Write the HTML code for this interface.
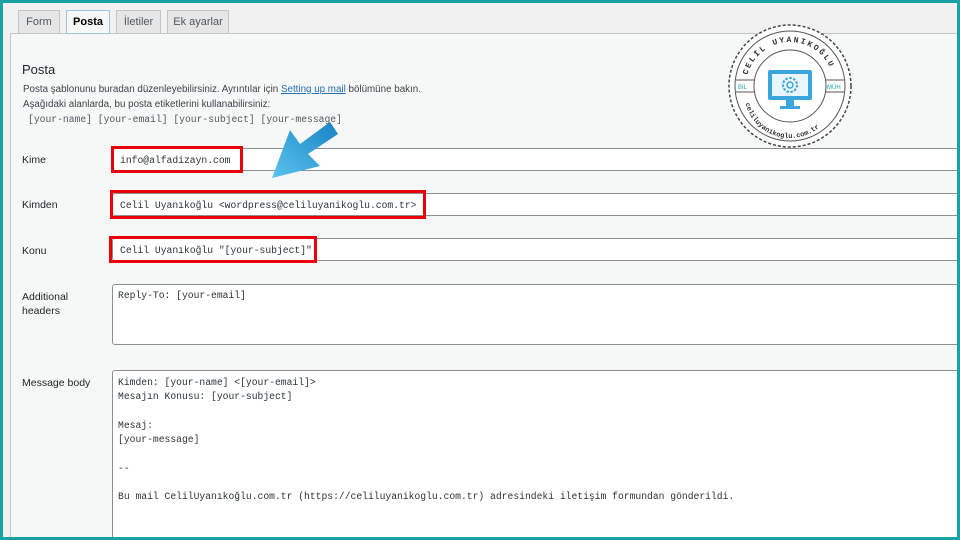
<!DOCTYPE html>
<html><head><meta charset="utf-8"><style>
*{margin:0;padding:0;box-sizing:border-box}
html,body{width:960px;height:540px;overflow:hidden}
body{background:#f1f1f1;font-family:"Liberation Sans",sans-serif;position:relative;color:#1d2327}
.frame{position:absolute;left:0;top:0;width:960px;height:540px;border:3px solid #17a2a4;pointer-events:none;z-index:10}
.tab{position:absolute;top:10px;height:24px;border:1px solid #c3c4c7;background:#e6e6e6;font-size:11px;color:#50575e;line-height:22px;text-align:center}
.tab.a{background:#f6f7f7;border:1px solid #9ec2e6;color:#000;font-weight:bold;height:24px}
.panel{position:absolute;left:10px;top:33px;width:960px;height:520px;background:#f6f7f7;border:1px solid #c3c4c7}
.t{position:absolute;font-size:9.8px;color:#3c434a}
.mono{font-family:"Liberation Mono",monospace;font-size:9.7px;color:#2c3338}
.lbl{position:absolute;left:22px;font-size:10.5px;color:#1d2327}
.inp{position:absolute;left:112px;width:860px;background:#fff;border:1px solid #8c8f94;border-radius:3px;overflow:hidden}
.inp span{position:absolute;left:7px;top:6px}
.red{position:absolute;border:3px solid #e8000b}
</style></head><body>
<div class="panel"></div>
<div class="tab" style="left:18px;width:42px">Form</div>
<div class="tab a" style="left:66px;width:44px">Posta</div>
<div class="tab" style="left:116px;width:45px">İletiler</div>
<div class="tab" style="left:167px;width:62px">Ek ayarlar</div>
<div class="t" style="left:22px;top:62px;font-size:13px;color:#1d2327">Posta</div>
<div class="t" style="left:23px;top:84px">Posta şablonunu buradan düzenleyebilirsiniz. Ayrıntılar için <span style="color:#2271b1;text-decoration:underline">Setting up mail</span> bölümüne bakın.</div>
<div class="t" style="left:23px;top:99px">Aşağıdaki alanlarda, bu posta etiketlerini kullanabilirsiniz:</div>
<div class="t mono" style="left:28px;top:114px;color:#50575e">[your-name] [your-email] [your-subject] [your-message]</div>
<div class="lbl" style="top:154px">Kime</div>
<div class="inp mono" style="top:148px;height:23px"><span>info@alfadizayn.com</span></div>
<div class="lbl" style="top:199px">Kimden</div>
<div class="inp mono" style="top:193px;height:23px"><span>Celil Uyanıkoğlu &lt;wordpress@celiluyanikoglu.com.tr&gt;</span></div>
<div class="lbl" style="top:245px">Konu</div>
<div class="inp mono" style="top:238px;height:23px"><span>Celil Uyanıkoğlu "[your-subject]"</span></div>
<div class="lbl" style="top:290px;line-height:14px">Additional<br>headers</div>
<div class="inp mono" style="top:284px;height:61px"><span style="left:5px;top:5px">Reply-To: [your-email]</span></div>
<div class="lbl" style="top:377px">Message body</div>
<div class="inp mono" style="top:370px;height:190px"><span style="left:5px;top:5px;line-height:14.3px;white-space:pre">Kimden: [your-name] &lt;[your-email]&gt;
Mesajın Konusu: [your-subject]

Mesaj:
[your-message]

--

Bu mail CelilUyanıkoğlu.com.tr (https://celiluyanikoglu.com.tr) adresindeki iletişim formundan gönderildi.</span></div>
<div class="red" style="left:111px;top:146px;width:132px;height:27px"></div>
<div class="red" style="left:110px;top:190px;width:316px;height:29px"></div>
<div class="red" style="left:109px;top:236px;width:208px;height:27px"></div>
<svg style="position:absolute;left:260px;top:110px" width="90" height="80" viewBox="0 0 90 80">
<defs><linearGradient id="g" x1="0" y1="1" x2="1" y2="0"><stop offset="0" stop-color="#5cc3ee"/><stop offset="1" stop-color="#1783c4"/></linearGradient></defs>
<polygon points="12,68 30,20 40,34 70,12 78,24 48,44 60,56" fill="url(#g)"/>
</svg>
<svg style="position:absolute;left:726px;top:22px" width="128" height="128" viewBox="0 0 128 128">
<circle cx="64" cy="64" r="61" fill="#fff" stroke="#444" stroke-width="1.5" stroke-dasharray="3 2"/>
<circle cx="64" cy="64" r="55" fill="none" stroke="#555" stroke-width="1"/>
<circle cx="64" cy="64" r="36" fill="none" stroke="#555" stroke-width="1"/>
<line x1="10" y1="58" x2="28" y2="58" stroke="#555"/><line x1="10" y1="70" x2="28" y2="70" stroke="#555"/>
<line x1="100" y1="58" x2="118" y2="58" stroke="#555"/><line x1="100" y1="70" x2="118" y2="70" stroke="#555"/>
<text x="12" y="67" font-size="6" fill="#1aa3a3" font-family="Liberation Sans">BİL</text>
<text x="101" y="67" font-size="6" fill="#1aa3a3" font-family="Liberation Sans">MÜH</text>
<path id="top" d="M20,64 A44,44 0 0 1 108,64" fill="none"/>
<text font-size="8" font-weight="bold" letter-spacing="2" fill="#333" font-family="Liberation Mono"><textPath href="#top" startOffset="8%">CELİL UYANIKOĞLU</textPath></text>
<path id="bot" d="M18,70 A46,46 0 0 0 110,70" fill="none"/>
<text font-size="7" font-weight="bold" fill="#333" font-family="Liberation Mono"><textPath href="#bot" startOffset="8%">celiluyanikoglu.com.tr</textPath></text>
<rect x="42" y="48" width="44" height="30" rx="2" fill="#3ba6dd"/>
<rect x="46" y="52" width="36" height="22" fill="#eaf6fd"/>
<rect x="60" y="78" width="8" height="6" fill="#3ba6dd"/><rect x="54" y="84" width="20" height="3" fill="#3ba6dd"/>
<circle cx="64" cy="63" r="7" fill="none" stroke="#3ba6dd" stroke-width="2" stroke-dasharray="2.5 1.5"/><circle cx="64" cy="63" r="3" fill="none" stroke="#3ba6dd" stroke-width="1.5"/>
</svg>
<div class="frame"></div>
</body></html>
